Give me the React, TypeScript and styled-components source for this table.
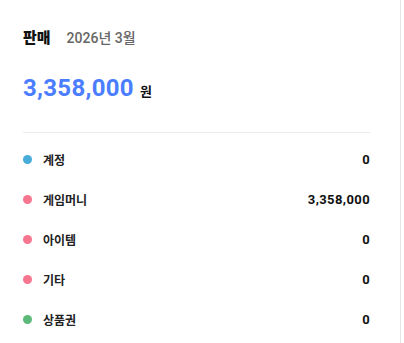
import styled, { createGlobalStyle } from 'styled-components'

const GlobalStyle = createGlobalStyle`
  html, body {
    margin: 0;
    padding: 0;
    background: #fff;
  }
  body {
    font-family: Roboto, "Noto Sans CJK KR", sans-serif;
  }
`

const Card = styled.div`
  width: 401px;
  height: 343px;
  box-sizing: border-box;
  border-right: 1px solid #e6e6e6;
  padding: 26px 30px 0 23px;
  background: #fff;
`

const Header = styled.div`
  display: flex;
  align-items: baseline;
  gap: 16px;
`

const Title = styled.h2`
  margin: 0;
  font-size: 15px;
  font-weight: 900;
  color: #111;
  font-family: "Noto Sans CJK KR", sans-serif;
`

const Period = styled.span`
  font-size: 14px;
  font-weight: 500;
  color: #666;
  font-family: Roboto, "Noto Sans CJK KR", sans-serif;
`

const Total = styled.div`
  display: flex;
  align-items: baseline;
  gap: 6px;
  margin-top: 27px;
  padding-bottom: 30px;
  border-bottom: 1px solid #ececec;
`

const Amount = styled.span`
  font-family: Roboto, sans-serif;
  font-size: 24px;
  font-weight: 700;
  color: #4a7dff;
  letter-spacing: 0.3px;
`

const Unit = styled.span`
  font-family: "Noto Sans CJK KR", sans-serif;
  font-size: 13px;
  font-weight: 700;
  color: #111;
`

const List = styled.ul`
  list-style: none;
  margin: 6px 0 0;
  padding: 0;
`

const Row = styled.li`
  display: flex;
  align-items: center;
  height: 40px;
`

const Dot = styled.span<{ $color: string }>`
  width: 9px;
  height: 9px;
  border-radius: 50%;
  background: ${({ $color }) => $color};
  margin-right: 11px;
  flex: none;
`

const Label = styled.span`
  flex: 1;
  font-family: "Noto Sans CJK KR", sans-serif;
  font-size: 12px;
  font-weight: 600;
  color: #222;
`

const Value = styled.span`
  font-family: Roboto, sans-serif;
  font-size: 13px;
  font-weight: 700;
  color: #111;
  letter-spacing: 0.4px;
`

const items = [
  { label: '계정', value: '0', color: '#46acd8' },
  { label: '게임머니', value: '3,358,000', color: '#f7768f' },
  { label: '아이템', value: '0', color: '#f7768f' },
  { label: '기타', value: '0', color: '#f7768f' },
  { label: '상품권', value: '0', color: '#5cb97a' },
]

export default function App() {
  return (
    <>
      <GlobalStyle />
      <Card>
        <Header>
          <Title>판매</Title>
          <Period>2026년 3월</Period>
        </Header>
        <Total>
          <Amount>3,358,000</Amount>
          <Unit>원</Unit>
        </Total>
        <List>
          {items.map((item) => (
            <Row key={item.label}>
              <Dot $color={item.color} />
              <Label>{item.label}</Label>
              <Value>{item.value}</Value>
            </Row>
          ))}
        </List>
      </Card>
    </>
  )
}
